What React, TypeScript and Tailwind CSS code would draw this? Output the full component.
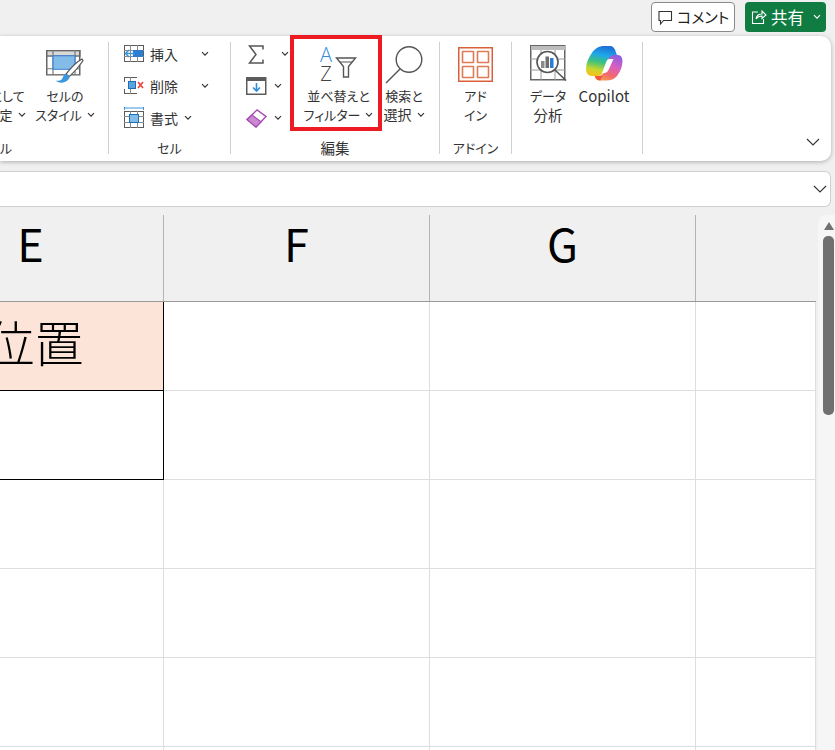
import { ReactNode } from "react";

const FONT = "font-['Noto_Sans_CJK_JP','Noto_Sans',sans-serif] [font-feature-settings:'palt']";

function Chevron({ className = "" }: { className?: string }) {
  return (
    <svg width="8" height="6" viewBox="0 0 8 6" className={className}>
      <path d="M1 1.2 4 4.2 7 1.2" fill="none" stroke="#333" strokeWidth="1.2" />
    </svg>
  );
}

function GridBase({ children }: { children?: ReactNode }) {
  return (
    <svg width="20" height="18" viewBox="0 0 20 18">
      <rect x="0.5" y="0.5" width="19" height="16" fill="#fff" stroke="#5c5c5c" />
      <path d="M6.5 0V17M13.5 0V17M0 5.5H20M0 11.5H20" stroke="#8a8a8a" />
      {children}
    </svg>
  );
}

const InsertIcon = () => (
  <GridBase>
    <rect x="9" y="5" width="10" height="7" fill="#2b7cd3" />
    <path d="M11 8.5H2M5 5 1.5 8.5 5 12" fill="none" stroke="#3a96dd" strokeWidth="1.5" />
  </GridBase>
);

const DeleteIcon = () => (
  <GridBase>
    <rect x="0" y="5" width="20" height="7" fill="#fff" />
    <rect x="13" y="0" width="7" height="17" fill="#fff" />
    <rect x="4.5" y="4.5" width="7" height="7" fill="#5ba3de" stroke="#1a6fb5" />
    <path d="M14 5 19 11M19 5 14 11" stroke="#e8403a" strokeWidth="1.6" />
  </GridBase>
);

const FormatIcon = () => (
  <svg width="20" height="22" viewBox="0 0 20 22">
    <path d="M0.5 1H19.5M0.5 0V3M19.5 0V3" stroke="#3a96dd" strokeWidth="1" fill="none" />
    <rect x="0.5" y="4.5" width="19" height="16" fill="#fff" stroke="#5c5c5c" />
    <path d="M6.5 4V21M13.5 4V21M0 9.5H20M0 15.5H20" stroke="#8a8a8a" />
    <rect x="5.5" y="7.5" width="9" height="8" fill="#84bce9" stroke="#1a6fb5" />
  </svg>
);

const SumIcon = () => (
  <svg width="16" height="19" viewBox="0 0 16 19">
    <path d="M15 4.5V1H1.5L8 9.5 1.5 18H15V14.5" fill="none" stroke="#555" strokeWidth="1.5" />
  </svg>
);

const FillIcon = () => (
  <svg width="21" height="18" viewBox="0 0 21 18">
    <rect x="0.75" y="0.75" width="19" height="16.5" fill="#fff" stroke="#5c5c5c" strokeWidth="1.5" />
    <rect x="1" y="1" width="19" height="3" fill="#5c5c5c" />
    <path d="M10.5 6V14M7 10.5 10.5 14 14 10.5" fill="none" stroke="#2f8fdc" strokeWidth="1.6" />
  </svg>
);

const EraserIcon = () => (
  <svg width="21" height="19" viewBox="0 0 21 19">
    <path d="M1 10.5 11 1 20 7.5 10 18Z" fill="#fff" stroke="#a64db3" strokeWidth="1.4" />
    <path d="M1 10.5 6 6 15 12.8 10 18Z" fill="#c98ad2" stroke="#a64db3" strokeWidth="1.2" />
  </svg>
);

const FunnelIcon = () => (
  <svg width="22" height="21" viewBox="0 0 22 21">
    <path d="M1.5 1H20.5L13.5 9.5V20H8.5V9.5Z" fill="#fff" stroke="#555" strokeWidth="1.4" />
    <path d="M5 5H17" stroke="#555" strokeWidth="1" />
  </svg>
);

const SearchIcon = () => (
  <svg width="38" height="39" viewBox="0 0 38 39">
    <circle cx="24" cy="14.5" r="12.8" fill="#fff" stroke="#555" strokeWidth="1.4" />
    <path d="M15 24 1 38" stroke="#555" strokeWidth="1.4" />
  </svg>
);

const AddinIcon = () => (
  <svg width="35" height="35" viewBox="0 0 35 35">
    <rect x="0.75" y="0.75" width="33.5" height="33.5" fill="#fff" stroke="#d9603a" strokeWidth="1.5" />
    <rect x="4.5" y="4.5" width="11" height="11" rx="0.5" fill="#fff" stroke="#e07a56" strokeWidth="1.6" />
    <rect x="19.5" y="4.5" width="11" height="11" rx="0.5" fill="#fff" stroke="#e07a56" strokeWidth="1.6" />
    <rect x="4.5" y="19.5" width="11" height="11" rx="0.5" fill="#fff" stroke="#e07a56" strokeWidth="1.6" />
    <rect x="19.5" y="19.5" width="11" height="11" rx="0.5" fill="#fff" stroke="#e07a56" strokeWidth="1.6" />
  </svg>
);

const BrushIcon = () => (
  <svg width="38" height="34" viewBox="0 0 38 38" preserveAspectRatio="none" className="mt-[5px]">
    <rect x="0.75" y="0.75" width="33" height="27" fill="#fff" stroke="#666" strokeWidth="1.5" />
    <rect x="0.75" y="0.75" width="33" height="6" fill="#d8d8d8" stroke="#666" strokeWidth="1.5" />
    <path d="M7 0V28M29 0V28M0 21H34" stroke="#777" strokeWidth="1.2" />
    <rect x="7" y="6.5" width="22" height="15" fill="#84bce9" stroke="#2b7cd3" />
    <path d="M36 10C31 13 24 21 20 27L23.5 29.5C28 25 34 17 37 12Z" fill="#fff" stroke="#555" strokeWidth="1.2" />
    <path d="M19.5 26.5C17 28 17 32 15 33.5 13 34.6 11 34.5 10 34.5 12 37.5 20 37.5 23 32 24 30.5 23.5 29 23 28.8Z" fill="#3a96dd" />
  </svg>
);

const AnalyzeIcon = () => (
  <svg width="37" height="36" viewBox="0 0 37 36" className="mt-[-2px]">
    <rect x="0.75" y="0.75" width="34" height="34" fill="#fff" stroke="#666" strokeWidth="1.5" />
    <rect x="1" y="1" width="34" height="4" fill="#bdbdbd" />
    <path d="M11 5V35M25 5V35M0 14H35M0 25H35" stroke="#9a9a9a" />
    <circle cx="17.5" cy="17" r="10.5" fill="#fff" stroke="#555" strokeWidth="1.6" />
    <path d="M25 25 36 35.5" stroke="#555" strokeWidth="1.6" />
    <rect x="11" y="16" width="3.5" height="7" fill="#8a8a8a" />
    <rect x="15.5" y="11.5" width="3.5" height="11.5" fill="#6e6e6e" />
    <rect x="20" y="13" width="3.5" height="10" fill="#2b7cd3" />
  </svg>
);

const CopilotIcon = () => (
  <svg width="38" height="36" viewBox="0 0 38 36" className="mt-[-2px]">
    <defs>
      <linearGradient id="copL" x1="0.55" y1="0" x2="0.35" y2="1">
        <stop offset="0" stopColor="#1f6fd6" />
        <stop offset="0.3" stopColor="#1fa8e8" />
        <stop offset="0.55" stopColor="#3fc27a" />
        <stop offset="0.8" stopColor="#c7d62e" />
        <stop offset="1" stopColor="#f6c21c" />
      </linearGradient>
      <linearGradient id="copR" x1="0.75" y1="0" x2="0.3" y2="1">
        <stop offset="0" stopColor="#8e5fe0" />
        <stop offset="0.4" stopColor="#d95fc0" />
        <stop offset="0.75" stopColor="#f46a6a" />
        <stop offset="1" stopColor="#f79a52" />
      </linearGradient>
    </defs>
    <path d="M19 1H25C28 1 29.5 3 30.5 6L33 13H26C24 13 22.5 14 21.5 17L18.5 26C17 30 15 31 12 31H7C3 31 1 28 1 24 1 18 3.5 13 6.5 8.5 9.5 3.5 14 1 19 1Z" fill="url(#copL)" />
    <path d="M29 10H33C36 10 37.5 13 37.5 16 37.5 22 35 27 32 31 29.5 34 26 35.5 21 35.5H15C12.5 35.5 10.5 34 9.5 31H13C16 31 18.5 29.5 19.5 26L22.5 17C23.5 13 26 10 29 10Z" fill="url(#copR)" />
    <path d="M25 14H28.5L23.5 25C22.5 27 21 28 19.5 28H17L21 17.5C22 15 23 14 25 14Z" fill="#fff" />
    <path d="M10 31H18C16 33 15.5 35.5 15.5 35.5 12.5 35.5 10.5 34 10 31Z" fill="#f2563c" />
  </svg>
);

function SmallRow({ icon, label, chevronClass }: { icon: ReactNode; label: string; chevronClass: string }) {
  return (
    <div className="flex h-[32px] items-center">
      <div className="flex w-[26px] items-center">{icon}</div>
      <span className="text-[14px] leading-none">{label}</span>
      <Chevron className={chevronClass} />
    </div>
  );
}

function BigButton({ icon, lines, chevron, className = "", line2Class = "", textClass = "text-[13px]" }: { icon: ReactNode; lines: string[]; chevron?: boolean; className?: string; line2Class?: string; textClass?: string }) {
  return (
    <div className={`flex flex-col items-center ${className}`}>
      <div className="mt-[2px] flex h-[40px] items-center justify-center">{icon}</div>
      <div className={`mt-[2px] text-center leading-[19px] whitespace-nowrap ${textClass}`}>
        <div>{lines[0]}</div>
        <div className={`flex items-center justify-center ${line2Class}`}>
          {lines[1]}
          {chevron && <Chevron className="ml-[5px]" />}
        </div>
      </div>
    </div>
  );
}

function Group({ label, width, children, last }: { label?: ReactNode; width: string; children: ReactNode; last?: boolean }) {
  return (
    <div className={`relative flex h-[125px] flex-col py-[6px] ${width}`}>
      <div className={`flex h-[112px] flex-col ${last ? "" : "border-r border-[#d0d0d0]"}`}>
        <div className="min-h-0 flex-1">{children}</div>
        <div className="h-[17px] pt-[3px] text-center text-[13px] leading-[15px]">{label}</div>
      </div>
    </div>
  );
}

function TopBar() {
  return (
    <div className="flex h-[36px] items-start justify-end gap-[10px] pt-[2px] pr-[9px]">
      <div className="flex h-[30px] w-[84px] items-center gap-[4px] rounded-[4px] border border-[#8a8a8a] bg-white pl-[6px] text-[15px] text-[#222]">
        <svg width="15" height="15" viewBox="0 0 15 15">
          <path d="M1 1.5H13.5V10.5H5.5L2.5 14V10.5H1Z" fill="none" stroke="#333" strokeWidth="1.1" />
        </svg>
        コメント
      </div>
      <div className="flex h-[30px] w-[81px] items-center rounded-[4px] bg-[#107c41] pl-[6px] text-[16.5px] text-white">
        <svg width="16" height="16" viewBox="0 0 16 16" className="mr-[4px]">
          <path d="M7 3H1.5V14.5H12.5V10M5 10C5.5 6.5 8 5 11 5V2L15 6 11 9.5V7C8.5 7 6.5 8 5 10Z" fill="none" stroke="#fff" strokeWidth="1.1" />
        </svg>
        共有
        <svg width="8" height="6" viewBox="0 0 8 6" className="ml-[9px]">
          <path d="M1 1.2 4 4.2 7 1.2" fill="none" stroke="#fff" strokeWidth="1.2" />
        </svg>
      </div>
    </div>
  );
}

function Ribbon() {
  return (
    <div className="relative mr-[4px] flex h-[125px] rounded-r-[10px] bg-white text-[#333] shadow-[0_1px_4px_rgba(0,0,0,0.28)]">
      <Group
        width="w-[109px]"
        label={
          <div className="flex w-[12px] justify-end whitespace-nowrap">スタイル</div>
        }
      >
        <div className="flex justify-end pr-[10px]">
          <BigButton className="w-[96px] shrink-0" icon={<span />} lines={["テーブルとして", "書式設定"]} line2Class="pl-[18px]" chevron />
          <BigButton className="w-[66px] shrink-0" icon={<BrushIcon />} lines={["セルの", "スタイル"]} chevron />
        </div>
      </Group>

      <Group width="w-[122px]" label="セル">
        <div className="mt-[-4px] pl-[15px]">
          <SmallRow icon={<InsertIcon />} label="挿入" chevronClass="ml-[23px]" />
          <SmallRow icon={<DeleteIcon />} label="削除" chevronClass="ml-[23px]" />
          <SmallRow icon={<FormatIcon />} label="書式" chevronClass="ml-[6px]" />
        </div>
      </Group>

      <Group width="w-[209px]" label={<span className="text-[14.5px]">編集</span>}>
        <div className="flex">
          <div className="mt-[-4px] w-[62px] pl-[15px]">
            <div className="flex h-[32px] items-center pl-[2px]">
              <SumIcon />
              <Chevron className="ml-[17px]" />
            </div>
            <div className="flex h-[32px] items-center">
              <FillIcon />
              <Chevron className="ml-[7px]" />
            </div>
            <div className="flex h-[32px] items-center">
              <EraserIcon />
              <Chevron className="ml-[7px]" />
            </div>
          </div>
          <BigButton
            className="w-[87px] pl-[4px]"
            icon={
              <div className="flex items-end">
                <div className="flex flex-col items-center font-['Open_Sans'] text-[20px] leading-[19px] font-light">
                  <span className="text-[#2f8fdc]">A</span>
                  <span className="text-[#444]">Z</span>
                </div>
                <div className="mb-[5px] ml-[3px]">
                  <FunnelIcon />
                </div>
              </div>
            }
            lines={["並べ替えと", "フィルター"]}
            chevron
          />
          <BigButton className="w-[48px]" icon={<SearchIcon />} lines={["検索と", "選択"]} line2Class="text-[14px]" chevron />
        </div>
      </Group>

      <Group width="w-[72px]" label="アドイン">
        <BigButton icon={<AddinIcon />} lines={["アド", "イン"]} />
      </Group>

      <Group width="w-[131px]">
        <div className="flex pl-[14px]">
          <BigButton className="w-[44px]" icon={<AnalyzeIcon />} lines={["データ", "分析"]} line2Class="text-[14.5px]" />
          <BigButton className="ml-[6px] w-[56px]" icon={<CopilotIcon />} lines={["Copilot", ""]} textClass="text-[15px]" />
        </div>
      </Group>

      <Group width="flex-1" last label={
        <div className="mt-[-2px] flex justify-end pr-[11px]">
          <svg width="14" height="8" viewBox="0 0 14 8">
            <path d="M1 1 7 7 13 1" fill="none" stroke="#333" strokeWidth="1.1" />
          </svg>
        </div>
      }>
        <span />
      </Group>

      {/* 赤枠の注釈 */}
      <div className="absolute top-[-1px] left-[290px] h-[96px] w-[92px] border-[4px] border-[#ed1c24]" />
    </div>
  );
}

function FormulaBar() {
  return (
    <div className="mt-[10px] mr-[4px] flex h-[36px] items-center justify-end rounded-r-[6px] border-y border-r border-[#cfcfcf] bg-white pr-[3px]">
      <svg width="14" height="8" viewBox="0 0 14 8">
        <path d="M1 1 7 7 13 1" fill="none" stroke="#333" strokeWidth="1.1" />
      </svg>
    </div>
  );
}

const COLS = ["E", "F", "G", ""];
const ROWS = [0, 1, 2, 3, 4, 5];

function cellClass(row: number, col: number) {
  const base = "flex h-[89px] items-center justify-center border-r border-b bg-white";
  if (col === 0 && row === 0) return "flex h-[89px] items-center justify-center border-r border-b border-black bg-[#fde4d8]";
  if (col === 0 && row === 1) return `${base} border-black`;
  return `${base} border-[#dedede]`;
}

function Sheet() {
  return (
    <div className="mt-[8px] flex min-h-0 flex-1">
      <div className="w-[816px] shrink-0 overflow-hidden">
        <div className="ml-[-102px] w-[918px]">
          <div className="grid h-[87px] grid-cols-[266px_266px_266px_120px] border-b border-[#9a9a9a]">
            {COLS.map((c) => (
              <div key={c || "h"} className={c ? "flex items-center justify-center border-r border-[#b4b4b4] pb-[32px] text-[45px] leading-none text-black" : ""}>
                {c}
              </div>
            ))}
          </div>
          {ROWS.map((r) => (
            <div key={r} className="grid grid-cols-[266px_266px_266px_120px]">
              {COLS.map((c, i) => (
                <div key={c || "h"} className={cellClass(r, i)}>
                  {r === 0 && i === 0 && <span className="pb-[12px] pl-[8px] text-[49px] leading-none font-light text-black">位置</span>}
                </div>
              ))}
            </div>
          ))}
        </div>
      </div>
      <div className="ml-[2px] flex w-[17px] flex-col items-end rounded-tl-[8px] bg-[#f6f6f6] pt-[7px] pr-[1px]">
        <div className="h-0 w-0 border-x-[5.5px] border-b-[8px] border-x-transparent border-b-[#707070]" />
        <div className="mt-[6px] h-[179px] w-[11px] rounded-[5px] bg-[#707070]" />
      </div>
    </div>
  );
}

export default function App() {
  return (
    <div className={`flex h-[750px] w-[835px] flex-col overflow-hidden bg-[#f0f0f0] ${FONT}`}>
      <TopBar />
      <Ribbon />
      <FormulaBar />
      <Sheet />
    </div>
  );
}
